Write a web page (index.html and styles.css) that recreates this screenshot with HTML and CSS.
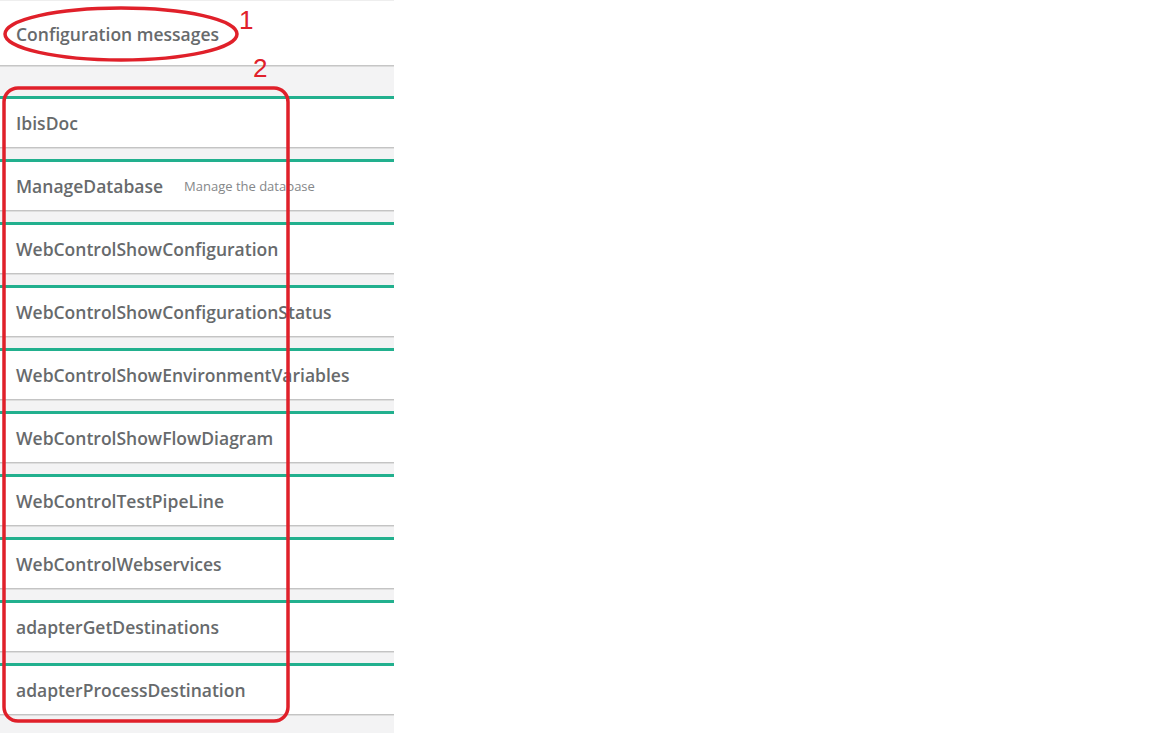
FILE: index.html
```html
<!DOCTYPE html>
<html>
<head>
<meta charset="utf-8">
<link rel="stylesheet" href="styles.css">
</head>
<body>
<div class="panel">
  <div class="header"><h5 class="title">Configuration messages</h5></div>
  <div class="list">
    <div class="card"><h5 class="title">IbisDoc</h5></div>
    <div class="card"><h5 class="title">ManageDatabase</h5><small class="desc">Manage the database</small></div>
    <div class="card"><h5 class="title">WebControlShowConfiguration</h5></div>
    <div class="card"><h5 class="title">WebControlShowConfigurationStatus</h5></div>
    <div class="card"><h5 class="title">WebControlShowEnvironmentVariables</h5></div>
    <div class="card"><h5 class="title">WebControlShowFlowDiagram</h5></div>
    <div class="card"><h5 class="title">WebControlTestPipeLine</h5></div>
    <div class="card"><h5 class="title">WebControlWebservices</h5></div>
    <div class="card"><h5 class="title">adapterGetDestinations</h5></div>
    <div class="card"><h5 class="title">adapterProcessDestination</h5></div>
  </div>
</div>
<svg class="annot" width="1152" height="733" viewBox="0 0 1152 733">
  <ellipse cx="121" cy="34" rx="116" ry="26" fill="none" stroke="#e0202a" stroke-width="3.5"/>
  <rect x="4" y="88" width="284" height="633" rx="14" ry="14" fill="none" stroke="#e0202a" stroke-width="3.5"/>
  <text x="239" y="29" class="num">1</text>
  <text x="253" y="77" class="num">2</text>
</svg>
</body>
</html>
```

FILE: styles.css
```css
html, body {
  margin: 0;
  padding: 0;
  background: #ffffff;
}
body {
  width: 1152px;
  height: 733px;
  overflow: hidden;
  position: relative;
  font-family: "Open Sans", "Liberation Sans", sans-serif;
}
.panel {
  width: 394px;
  height: 733px;
  background: #f3f3f4;
}
.header {
  height: 63px;
  padding-top: 1px;
  background: #ffffff;
  border-top: 1px solid #eeeeee;
  display: flex;
  align-items: center;
  padding-left: 16px;
  box-shadow: 0 1px 0 #c6c6c6, 0 2px 0 #dcdcdc;
}
.title {
  margin: 0;
  font-size: 17.5px;
  font-weight: 600;
  color: #676a6c;
  white-space: nowrap;
}
.list {
  padding-top: 31px;
}
.card {
  height: 47px;
  padding-bottom: 1px;
  background: #ffffff;
  border-top: 3px solid #22b08e;
  display: flex;
  align-items: center;
  padding-left: 16px;
  margin-bottom: 12px;
  box-shadow: 0 1px 0 #c4c4c4, 0 2px 0 #dedede;
}
.desc {
  margin-left: 21px;
  font-size: 13px;
  color: #858789;
  font-weight: 400;
}
.annot {
  position: absolute;
  left: 0;
  top: 0;
  pointer-events: none;
}
.num {
  font-family: "Liberation Sans", sans-serif;
  font-size: 26px;
  fill: #e0202a;
}
```
